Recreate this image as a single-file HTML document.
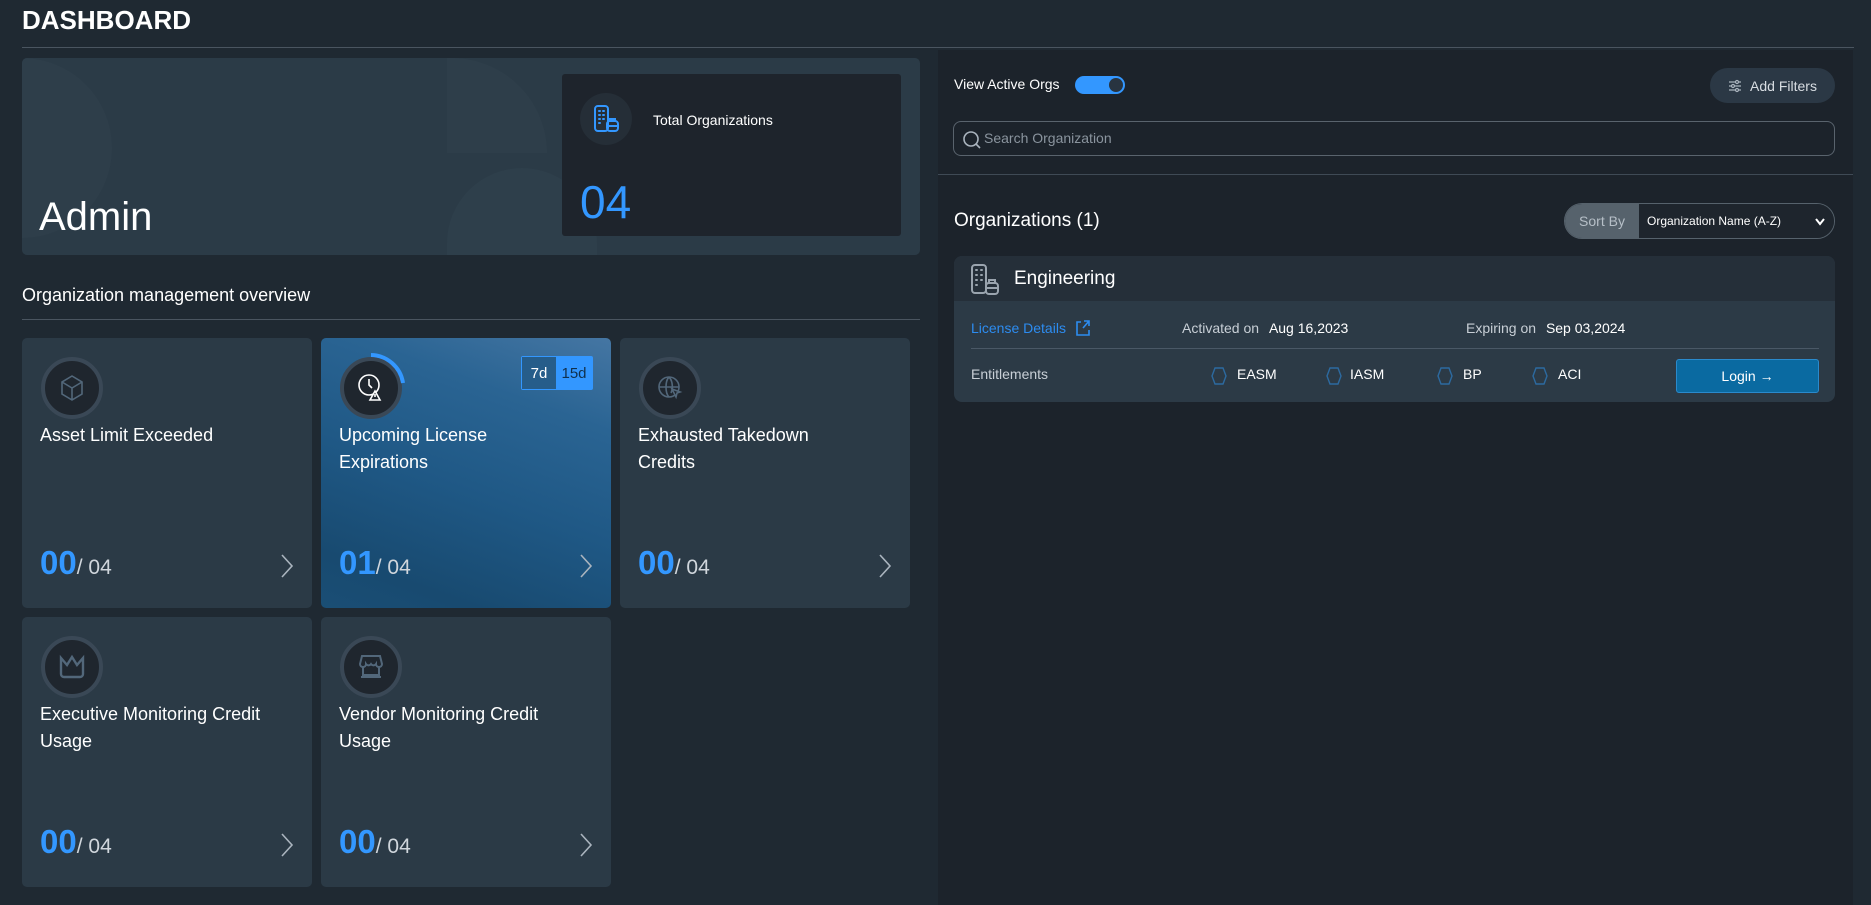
<!DOCTYPE html>
<html><head><meta charset="utf-8"><style>
*{box-sizing:border-box;margin:0;padding:0}
body{width:1871px;height:905px;background:#1f2932;font-family:"Liberation Sans",sans-serif;color:#fff;position:relative;overflow:hidden}
.a{position:absolute}
.card{position:absolute;background:#2b3a46;border-radius:5px;width:290px;height:270px}
.ic{position:absolute;left:19px;top:19px;width:62px;height:62px;border-radius:50%;background:#1f262e;border:4px solid #3a4856;display:flex;align-items:center;justify-content:center}
.tt{position:absolute;left:18px;top:84px;font-size:18px;line-height:27px;width:265px}
.num{position:absolute;left:18px;top:206px;font-size:33px;font-weight:bold;color:#3397ff}
.num span{font-size:21px;font-weight:normal;color:#d0d6dc}
.chev{position:absolute;left:258px;top:215px}
.hex{position:absolute;top:367px}
</style></head><body>
<div class="a" style="left:22px;top:5px;font-size:26px;font-weight:bold">DASHBOARD</div>
<div class="a" style="left:22px;top:47px;width:1832px;height:1px;background:#4a5560"></div>
<div class="a" style="left:938px;top:50px;width:915px;height:855px;background:#1c232b"></div>
<div class="a" style="left:938px;top:174px;width:915px;height:1px;background:#3f4a55"></div>

<!-- Admin card -->
<div class="a" style="left:22px;top:58px;width:898px;height:197px;background:#2b3b47;border-radius:5px;overflow:hidden">
<div class="a" style="left:-40px;top:0;width:130px;height:180px;border-radius:0 100px 100px 0;background:#2e3e4a"></div>
<div class="a" style="left:425px;top:110px;width:150px;height:150px;border-radius:75px 75px 0 0;background:#2e3f4b"></div>
<div class="a" style="left:425px;top:0;width:100px;height:95px;border-radius:0 100px 0 0;background:#2e3e4a"></div>
</div>
<div class="a" style="left:39px;top:195px;font-size:40px">Admin</div>
<div class="a" style="left:562px;top:74px;width:339px;height:162px;background:#1e242c;border-radius:3px"></div>
<div class="a" style="left:580px;top:93px;width:52px;height:52px;border-radius:50%;background:#252e37;display:flex;align-items:center;justify-content:center">
<svg width="28" height="30" viewBox="0 0 28 30" fill="none" stroke="#3397ff" stroke-width="2"><rect x="3" y="2" width="13" height="25" rx="3"/><path d="M7 7h1M11 7h1M7 11h1M11 11h1M7 15h1M11 15h1M7 19h1" stroke-linecap="round"/><rect x="15" y="17" width="11" height="10" rx="3"/><path d="M15 22h11M18 17v-2h5v2"/></svg></div>
<div class="a" style="left:653px;top:112px;font-size:14px">Total Organizations</div>
<div class="a" style="left:580px;top:175px;font-size:46px;color:#3397ff">04</div>

<div class="a" style="left:22px;top:285px;font-size:18px">Organization management overview</div>
<div class="a" style="left:22px;top:319px;width:898px;height:1px;background:#4a5560"></div>

<!-- cards -->
<div class="card" style="left:22px;top:338px"><div class="ic"><svg width="26" height="28" viewBox="0 0 26 28" fill="none" stroke="#52677a" stroke-width="1.6"><path d="M13 2l10 6v12l-10 6-10-6V8z M3 8l10 6 10-6 M13 14v12"/></svg></div><div class="tt">Asset Limit Exceeded</div><div class="num">00<span>/ 04</span></div><svg class="chev" width="14" height="26" viewBox="0 0 14 26"><path d="M2 2l10 11L2 24" stroke="#aab4be" stroke-width="1.6" fill="none"/></svg></div>

<div class="card" style="left:321px;top:338px;background:linear-gradient(200deg,#4576a3 0%,#2a6493 25%,#1f5885 55%,#184a70 85%,#1a4e75 100%);overflow:hidden">
<div class="ic" style="border-color:#3a4856"><svg width="30" height="32" viewBox="0 0 30 32" fill="none" stroke="#fff" stroke-width="1.6"><circle cx="13" cy="13" r="10"/><path d="M13 7v6l3 3"/><path d="M19 19l5 9h-10z" fill="#1f262e"/><path d="M19 22v3"/></svg></div>
<svg class="a" style="left:15px;top:15px" width="70" height="70" viewBox="0 0 70 70"><path d="M35 2A33 33 0 0 1 67 30" stroke="#3397ff" stroke-width="4" fill="none"/></svg>
<div class="a" style="left:200px;top:18px;width:72px;height:34px;border:1px solid #3397ff;border-radius:2px;display:flex;font-size:15px"><div style="width:34px;background:#265d8a;display:flex;align-items:center;justify-content:center">7d</div><div style="flex:1;background:#3397ff;color:#10304c;display:flex;align-items:center;justify-content:center">15d</div></div>
<div class="tt">Upcoming License<br>Expirations</div><div class="num">01<span>/ 04</span></div><svg class="chev" width="14" height="26" viewBox="0 0 14 26"><path d="M2 2l10 11L2 24" stroke="#aab4be" stroke-width="1.6" fill="none"/></svg></div>

<div class="card" style="left:620px;top:338px"><div class="ic"><svg width="28" height="28" viewBox="0 0 28 28" fill="none" stroke="#52677a" stroke-width="1.6"><circle cx="13" cy="13" r="10"/><path d="M3 13h20M13 3c-4 4-4 16 0 20M13 3c4 4 4 12 2 16"/><path d="M16 15l8 3-3 1-1 4z" fill="#1f262e"/></svg></div><div class="tt">Exhausted Takedown<br>Credits</div><div class="num">00<span>/ 04</span></div><svg class="chev" width="14" height="26" viewBox="0 0 14 26"><path d="M2 2l10 11L2 24" stroke="#aab4be" stroke-width="1.6" fill="none"/></svg></div>

<div class="card" style="left:22px;top:617px"><div class="ic"><svg width="28" height="26" viewBox="0 0 28 26" fill="none" stroke="#52677a" stroke-width="2.4"><path d="M3 4l6 7 5-8 5 8 6-7v16a3 3 0 0 1-3 3H6a3 3 0 0 1-3-3z"/></svg></div><div class="tt">Executive Monitoring Credit<br>Usage</div><div class="num">00<span>/ 04</span></div><svg class="chev" width="14" height="26" viewBox="0 0 14 26"><path d="M2 2l10 11L2 24" stroke="#aab4be" stroke-width="1.6" fill="none"/></svg></div>

<div class="card" style="left:321px;top:617px"><div class="ic"><svg width="28" height="28" viewBox="0 0 28 28" fill="none" stroke="#52677a" stroke-width="2"><path d="M5 3h18l2 8a3 3 0 0 1-6 0 3 3 0 0 1-5 0 3 3 0 0 1-5 0 3 3 0 0 1-6 0z M6 13v9h16v-9 M4 24h20"/></svg></div><div class="tt">Vendor Monitoring Credit<br>Usage</div><div class="num">00<span>/ 04</span></div><svg class="chev" width="14" height="26" viewBox="0 0 14 26"><path d="M2 2l10 11L2 24" stroke="#aab4be" stroke-width="1.6" fill="none"/></svg></div>

<!-- right panel -->
<div class="a" style="left:954px;top:76px;font-size:14px">View Active Orgs</div>
<div class="a" style="left:1075px;top:76px;width:50px;height:18px;border-radius:9px;background:#3397ff"><div class="a" style="right:2px;top:2px;width:14px;height:14px;border-radius:50%;background:#283440"></div></div>
<div class="a" style="left:1710px;top:68px;width:125px;height:35px;border-radius:18px;background:#2b3845;display:flex;align-items:center;justify-content:center;font-size:14px;color:#d8dde2"><svg width="14" height="14" viewBox="0 0 14 14" stroke="#aab4be" stroke-width="1.2" style="margin-right:8px"><path d="M1 3h12M1 7h12M1 11h12"/><circle cx="9" cy="3" r="1.5" fill="#2b3845"/><circle cx="5" cy="7" r="1.5" fill="#2b3845"/><circle cx="9" cy="11" r="1.5" fill="#2b3845"/></svg>Add Filters</div>
<div class="a" style="left:953px;top:121px;width:882px;height:35px;border:1px solid #59636d;border-radius:8px"></div>
<svg class="a" style="left:962px;top:130px" width="20" height="20" viewBox="0 0 20 20" fill="none" stroke="#aab4be" stroke-width="1.6"><circle cx="9" cy="9" r="7"/><path d="M14 14l4 4"/></svg>
<div class="a" style="left:984px;top:130px;font-size:14px;color:#8a949e">Search Organization</div>

<div class="a" style="left:954px;top:210px;font-size:19px">Organizations (1)</div>
<div class="a" style="left:1564px;top:203px;width:271px;height:36px;border:1px solid #56626c;border-radius:18px;overflow:hidden;display:flex;font-size:12px"><div style="width:74px;background:#56626c;color:#b6bfc7;display:flex;align-items:center;justify-content:center;font-size:14px">Sort By</div><div style="flex:1;background:#1e252d;display:flex;align-items:center;padding-left:8px">Organization Name (A-Z)</div><svg style="position:absolute;right:8px;top:13px" width="12" height="10" viewBox="0 0 12 10"><path d="M2 2l4 5 4-5" stroke="#fff" stroke-width="2" fill="none"/></svg></div>

<div class="a" style="left:954px;top:256px;width:881px;height:146px;background:#2c3a46;border-radius:8px;overflow:hidden"><div style="height:45px;background:#252f39"></div></div>
<svg class="a" style="left:970px;top:263px" width="32" height="34" viewBox="0 0 32 34" fill="none" stroke="#9aa4ae" stroke-width="2"><rect x="2" y="2" width="14" height="28" rx="3"/><path d="M6 7h1M11 7h1M6 12h1M11 12h1M6 17h1M11 17h1M6 22h1" stroke-linecap="round"/><rect x="16" y="20" width="12" height="11" rx="3"/><path d="M16 25h12M19 20v-3h6v3"/></svg>
<div class="a" style="left:1014px;top:268px;font-size:19px">Engineering</div>
<div class="a" style="left:971px;top:320px;font-size:14px;color:#2d8cf0">License Details</div>
<svg class="a" style="left:1075px;top:319px" width="16" height="18" viewBox="0 0 16 18" fill="none" stroke="#2d8cf0" stroke-width="1.6"><path d="M6 3H2v13h12v-5M9 2h5v5M14 2l-6 7"/></svg>
<div class="a" style="left:1182px;top:320px;font-size:14px;color:#c8cfd6">Activated on <b style="color:#fff;font-weight:normal;margin-left:6px">Aug 16,2023</b></div>
<div class="a" style="left:1466px;top:320px;font-size:14px;color:#c8cfd6">Expiring on <b style="color:#fff;font-weight:normal;margin-left:6px">Sep 03,2024</b></div>
<div class="a" style="left:971px;top:348px;width:848px;height:1px;background:#4a5866"></div>
<div class="a" style="left:971px;top:366px;font-size:14px;color:#c8cfd6">Entitlements</div>
<svg class="hex" style="left:1211px" width="16" height="18" viewBox="0 0 16 18"><path d="M4 1h8l3 8-3 8H4L1 9z" stroke="#2c6aa0" stroke-width="1.4" fill="none"/></svg><div class="a" style="left:1237px;top:366px;font-size:14px">EASM</div>
<svg class="hex" style="left:1326px" width="16" height="18" viewBox="0 0 16 18"><path d="M4 1h8l3 8-3 8H4L1 9z" stroke="#2c6aa0" stroke-width="1.4" fill="none"/></svg><div class="a" style="left:1350px;top:366px;font-size:14px">IASM</div>
<svg class="hex" style="left:1437px" width="16" height="18" viewBox="0 0 16 18"><path d="M4 1h8l3 8-3 8H4L1 9z" stroke="#2c6aa0" stroke-width="1.4" fill="none"/></svg><div class="a" style="left:1463px;top:366px;font-size:14px">BP</div>
<svg class="hex" style="left:1532px" width="16" height="18" viewBox="0 0 16 18"><path d="M4 1h8l3 8-3 8H4L1 9z" stroke="#2c6aa0" stroke-width="1.4" fill="none"/></svg><div class="a" style="left:1558px;top:366px;font-size:14px">ACI</div>
<div class="a" style="left:1676px;top:359px;width:143px;height:34px;background:#0a6aa1;border:1px solid #2a8acc;border-radius:3px;display:flex;align-items:center;justify-content:center;font-size:14px">Login →</div>
</body></html>
